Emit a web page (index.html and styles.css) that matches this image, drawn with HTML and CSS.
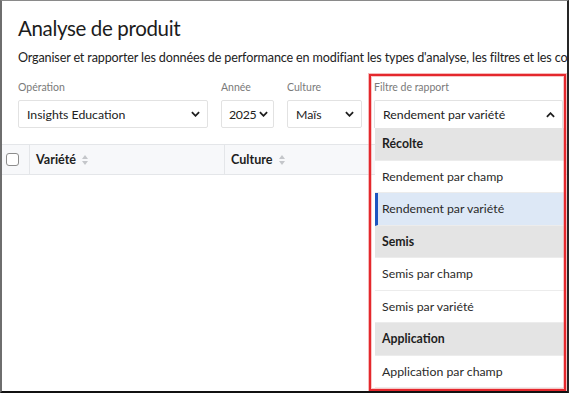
FILE: index.html
```html
<!DOCTYPE html>
<html lang="fr">
<head>
  <meta charset="UTF-8">
  <meta name="viewport" content="width=device-width, initial-scale=1.0">
  <title>Analyse de produit</title>
  <link rel="stylesheet" href="styles.css">
</head>
<body>
  <div class="frame">
    <main class="page">
      <h1 class="title">Analyse de produit</h1>
      <p class="subtitle">Organiser et rapporter les données de performance en modifiant les types d'analyse, les filtres et les colonnes.</p>

      <div class="filters">
        <div class="field field-op">
          <span class="label">Opération</span>
          <div class="select">
            <span>Insights Education</span>
            <svg class="chevron" viewBox="0 0 10 6"><path d="M1 1l4 4 4-4"/></svg>
          </div>
        </div>
        <div class="field field-year">
          <span class="label">Année</span>
          <div class="select">
            <span>2025</span>
            <svg class="chevron" viewBox="0 0 10 6"><path d="M1 1l4 4 4-4"/></svg>
          </div>
        </div>
        <div class="field field-crop">
          <span class="label">Culture</span>
          <div class="select">
            <span>Maïs</span>
            <svg class="chevron" viewBox="0 0 10 6"><path d="M1 1l4 4 4-4"/></svg>
          </div>
        </div>
        <!-- report filter, opened -->
        <div class="field field-report">
          <span class="label">Filtre de rapport</span>
          <div class="select is-open">
            <span>Rendement par variété</span>
            <svg class="chevron" viewBox="0 0 10 6"><path d="M1 5l4-4 4 4"/></svg>
          </div>
          <ul class="menu">
            <li class="menu-group">Récolte</li>
            <li class="menu-item">Rendement par champ</li>
            <li class="menu-item is-selected">Rendement par variété</li>
            <li class="menu-group">Semis</li>
            <li class="menu-item">Semis par champ</li>
            <li class="menu-item">Semis par variété</li>
            <li class="menu-group">Application</li>
            <li class="menu-item">Application par champ</li>
          </ul>
          <div class="highlight"></div>
        </div>
      </div>

      <div class="table">
        <div class="thead">
          <div class="th th-check"><span class="checkbox"></span></div>
          <div class="th th-variety">Variété
            <svg class="sort" viewBox="0 0 6 10"><path d="M3 0l3 4H0z"/><path d="M3 10l3-4H0z"/></svg>
          </div>
          <div class="th th-crop">Culture
            <svg class="sort" viewBox="0 0 6 10"><path d="M3 0l3 4H0z"/><path d="M3 10l3-4H0z"/></svg>
          </div>
          <div class="th th-rest"></div>
        </div>
      </div>
    </main>
  </div>
</body>
</html>
```

FILE: styles.css
```css
html, body {
  margin: 0;
  padding: 0;
  background: #fff;
  font-family: Lato, "Noto Sans", sans-serif;
  color: #222;
}
.frame {
  width: 569px;
  height: 393px;
  box-sizing: border-box;
  border-top: 1px solid #8a8a8a;
  border-left: 2px solid #6e6e6e;
  border-right: 2px solid #262626;
  border-bottom: 2px solid #111;
  overflow: hidden;
  background: #fff;
}
.page {
  padding: 14px 0 0 16px;
}
.title {
  margin: 0;
  font-size: 20.5px;
  line-height: 26px;
  font-weight: 400;
  letter-spacing: -0.35px;
  color: #1c1c1c;
}
.subtitle {
  margin: 8px 0 0;
  font-size: 12.6px;
  line-height: 18px;
  letter-spacing: -0.15px;
  white-space: nowrap;
  color: #222;
}
/* filter row */
.filters {
  display: flex;
  gap: 13px;
  margin-top: 13px;
}
.field {
  display: flex;
  flex-direction: column;
  gap: 5px;
}
.field-op { width: 190px; }
.field-year { width: 53px; }
.field-crop { width: 75px; margin-right: -1px; }
.field-report { width: 189px; position: relative; }
.label {
  font-size: 10.5px;
  line-height: 15px;
  color: #7a7a7a;
}
.select {
  height: 28px;
  box-sizing: border-box;
  border: 1px solid #e2e2e2;
  border-radius: 2px;
  display: flex;
  align-items: center;
  justify-content: space-between;
  padding: 0 7px 0 8px;
  font-size: 12.3px;
  color: #222;
}
.field-year .select {
  padding: 0 5px 0 7px;
  letter-spacing: -0.3px;
}
.select.is-open {
  border-bottom: none;
  border-radius: 2px 2px 0 0;
}
.chevron {
  width: 9px;
  height: 6px;
  flex: none;
  fill: none;
  stroke: #1e1e1e;
  stroke-width: 2;
}
/* dropdown list */
.menu {
  position: absolute;
  top: 48px;
  left: 1px;
  right: -2px;
  margin: 0;
  padding: 0;
  list-style: none;
  background: #fff;
  z-index: 2;
  font-size: 12.3px;
}
.menu li {
  height: 32.5px;
  box-sizing: border-box;
  display: flex;
  align-items: center;
  padding-left: 7px;
  border-bottom: 1px solid #ececec;
}
.menu-group {
  background: #e4e4e4;
  font-weight: 700;
  color: #1e1e1e;
}
.menu-item { color: #2a2a2a; }
.menu-item.is-selected {
  background: #dde8f6;
  border-left: 3px solid #1d55c0;
  padding-left: 4px;
}
.highlight {
  position: absolute;
  top: -6px;
  left: -5px;
  width: 197px;
  height: 317px;
  box-sizing: border-box;
  border: 2px solid #e4282d;
  box-shadow: 0 0 0 1px rgba(240, 130, 130, 0.55), inset 0 0 0 1px rgba(240, 130, 130, 0.45);
  z-index: 3;
  pointer-events: none;
}
/* table */
.table {
  margin: 16px 0 0 -16px;
}
.thead {
  display: flex;
  height: 31px;
  box-sizing: border-box;
  background: #f7f8fa;
  border-top: 1px solid #e4e6e9;
  border-bottom: 1px solid #e4e6e9;
  font-size: 12.6px;
  font-weight: 700;
  color: #1e1e1e;
}
.th {
  display: flex;
  align-items: center;
  gap: 6px;
  padding-left: 6px;
  border-right: 1px solid #e4e6e9;
}
.th-check { width: 28px; box-sizing: border-box; padding-left: 4px; }
.th-variety { width: 195px; box-sizing: border-box; }
.th-crop { width: 195px; box-sizing: border-box; }
.th-rest { flex: 1; border-right: none; }
.checkbox {
  width: 11px;
  height: 11px;
  border: 1px solid #8c8c8c;
  border-radius: 3px;
  background: #fff;
}
.sort {
  width: 6px;
  height: 10px;
  fill: #c4c6ca;
}
```
